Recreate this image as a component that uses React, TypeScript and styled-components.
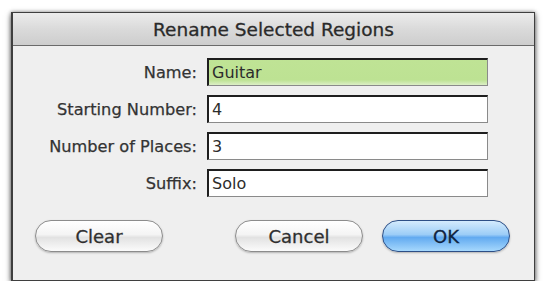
import React from 'react';
import styled, { createGlobalStyle } from 'styled-components';

const fields = [
  { label: 'Name:', value: 'Guitar', active: true },
  { label: 'Starting Number:', value: '4' },
  { label: 'Number of Places:', value: '3' },
  { label: 'Suffix:', value: 'Solo' }
];

const App = () => (
  <>
    <GlobalStyle />
    <Window>
      <TitleBar>Rename Selected Regions</TitleBar>
      <Body>
        <Form>
          {fields.map(f => (
            <React.Fragment key={f.label}>
              <Label>{f.label}</Label>
              <Field $active={f.active}>{f.value}</Field>
            </React.Fragment>
          ))}
        </Form>
        <ButtonRow>
          <PillButton>Clear</PillButton>
          <Spacer />
          <PillButton>Cancel</PillButton>
          <PillButton $primary>OK</PillButton>
        </ButtonRow>
      </Body>
    </Window>
  </>
);

const GlobalStyle = createGlobalStyle`
  html, body {
    margin: 0;
    padding: 0;
    background: #ffffff;
    font-family: "DejaVu Sans", Verdana, sans-serif;
  }
  #root {
    padding: 12px 0 0 11px;
  }
`;

const Window = styled.div`
  width: 521px;
  height: 267px;
  border: 1px solid #3f3f3f;
  border-left-width: 2px;
  background: #ededed;
  box-shadow: 0 3px 6px rgba(0, 0, 0, 0.55), 0 0 4px rgba(0, 0, 0, 0.4);
  display: flex;
  flex-direction: column;
`;

const TitleBar = styled.div`
  height: 32px;
  border-bottom: 1px solid #6a6a6a;
  background: linear-gradient(#ececec, #dadada 50%, #cdcdcd);
  display: flex;
  align-items: center;
  justify-content: center;
  font-size: 18.5px;
  color: #2a2a2a;
  -webkit-text-stroke: 0.3px #2a2a2a;
`;

const Body = styled.div`
  flex: 1;
  padding-top: 12px;
  background: #efefef;
  display: flex;
  flex-direction: column;
`;

const Form = styled.div`
  display: grid;
  grid-template-columns: 184px 281px;
  grid-auto-rows: 28px;
  column-gap: 10px;
  row-gap: 9px;
`;

const Label = styled.div`
  display: flex;
  align-items: center;
  justify-content: flex-end;
  font-size: 16.2px;
  color: #333333;
  -webkit-text-stroke: 0.25px #333333;
`;

const Field = styled.div<{ $active?: boolean }>`
  box-sizing: border-box;
  border-top: 2px solid #1e1e1e;
  border-left: 2px solid #1e1e1e;
  border-right: 1px solid #8a8a8a;
  border-bottom: 1px solid #8a8a8a;
  background: ${p =>
    p.$active ? 'linear-gradient(#bfe395, #bde293 80%, #dcefc6)' : '#ffffff'};
  padding-left: 3px;
  display: flex;
  align-items: center;
  font-size: 16px;
  color: #2c2c2c;
`;

const ButtonRow = styled.div`
  display: flex;
  align-items: center;
  gap: 19px;
  margin-top: 23px;
  padding: 0 24px 0 22px;
`;

const Spacer = styled.div`
  flex: 1;
`;

const PillButton = styled.div<{ $primary?: boolean }>`
  box-sizing: border-box;
  width: 128px;
  height: 32px;
  border-radius: 16px;
  border: 1px solid ${p => (p.$primary ? '#2d4f86' : '#8c8c8c')};
  background: ${p =>
    p.$primary
      ? 'linear-gradient(#d4ebfd, #9ccdf7 45%, #62aaf0 55%, #a6d8fd)'
      : 'linear-gradient(#ffffff, #f4f4f4 45%, #e2e2e2 55%, #fbfbfb)'};
  box-shadow: 0 1px 2px rgba(0, 0, 0, 0.25);
  display: flex;
  align-items: center;
  justify-content: center;
  font-size: 18px;
  color: ${p => (p.$primary ? '#10243f' : '#2f2f2f')};
  -webkit-text-stroke: 0.3px ${p => (p.$primary ? '#10243f' : '#2f2f2f')};
`;

export default App;
